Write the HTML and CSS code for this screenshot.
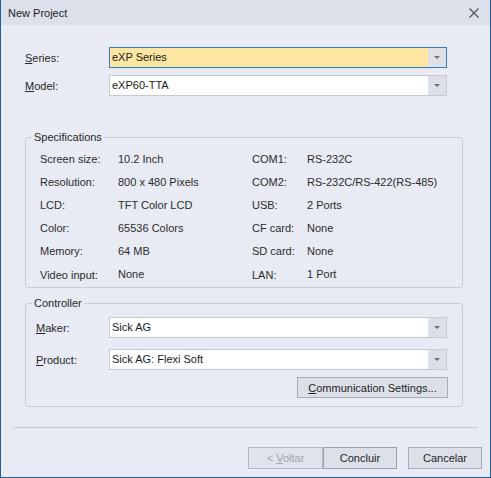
FILE: index.html
```html
<!DOCTYPE html>
<html>
<head>
<meta charset="utf-8">
<link rel="stylesheet" href="styles.css">
</head>
<body>
<div class="window">
  <div class="titlebar">
    <span class="title">New Project</span>
    <svg class="close" width="10" height="10" viewBox="0 0 10 10"><path d="M0.5 0.5 L9.5 9.5 M9.5 0.5 L0.5 9.5" stroke="#505257" stroke-width="1.2" fill="none"/></svg>
  </div>
  <div class="main">
    <div class="row">
      <span class="lbl lbl-top"><u>S</u>eries:</span>
      <div class="combo focused"><span class="combo-text">eXP Series</span><span class="combo-btn"><i class="arrow"></i></span></div>
    </div>
    <div class="row row-gap7">
      <span class="lbl lbl-top"><u>M</u>odel:</span>
      <div class="combo"><span class="combo-text">eXP60-TTA</span><span class="combo-btn"><i class="arrow"></i></span></div>
    </div>

    <fieldset class="group spec">
      <legend>Specifications</legend>
      <div class="spec-grid">
        <span>Screen size:</span><span>10.2 Inch</span><span>COM1:</span><span>RS-232C</span>
        <span>Resolution:</span><span>800 x 480 Pixels</span><span>COM2:</span><span>RS-232C/RS-422(RS-485)</span>
        <span>LCD:</span><span>TFT Color LCD</span><span>USB:</span><span>2 Ports</span>
        <span>Color:</span><span>65536 Colors</span><span>CF card:</span><span>None</span>
        <span>Memory:</span><span>64 MB</span><span>SD card:</span><span>None</span>
        <span class="low">Video input:</span><span>None</span><span class="low">LAN:</span><span>1 Port</span>
      </div>
    </fieldset>

    <fieldset class="group ctrl">
      <legend>Controller</legend>
      <div class="ctrl-body">
        <div class="row">
          <span class="lbl lbl-ctrl"><u>M</u>aker:</span>
          <div class="combo"><span class="combo-text">Sick AG</span><span class="combo-btn"><i class="arrow"></i></span></div>
        </div>
        <div class="row row-gap11">
          <span class="lbl lbl-ctrl"><u>P</u>roduct:</span>
          <div class="combo"><span class="combo-text">Sick AG: Flexi Soft</span><span class="combo-btn"><i class="arrow"></i></span></div>
        </div>
        <div class="row row-end">
          <button class="btn comm"><u>C</u>ommunication Settings...</button>
        </div>
      </div>
    </fieldset>
  </div>
  <div class="footer">
    <div class="sep"></div>
    <div class="buttons">
      <button class="btn dlg disabled">&lt; <u>V</u>oltar</button>
      <button class="btn dlg default">Concluir</button>
      <button class="btn dlg cancel">Cancelar</button>
    </div>
  </div>
</div>
</body>
</html>
```

FILE: styles.css
```css
html, body {
  margin: 0;
  padding: 0;
  background: #e8ebf4;
}
body {
  font-family: "Liberation Sans", Arial, sans-serif;
  font-size: 11px;
  color: #262626;
}
.window {
  width: 491px;
  height: 478px;
  box-sizing: border-box;
  border: 1px solid #1d5e9c;
  border-top: none;
  background: #e8ebf4;
  display: flex;
  flex-direction: column;
}
.titlebar {
  height: 25px;
  flex: none;
  background: #dbe0ea;
  display: flex;
  align-items: center;
  justify-content: space-between;
  padding: 0 11px 0 7px;
}
.title {
  font-size: 11px;
  color: #1e1e1e;
  line-height: 14px;
}
.close {
  display: block;
}
.main {
  padding: 22px 27px 0 24px;
}
.row {
  display: flex;
  align-items: center;
}
.row-gap7 { margin-top: 7px; }
.row-gap11 { margin-top: 11px; }
.row-end {
  justify-content: flex-end;
  margin-top: 7px;
}
.lbl {
  flex: none;
  color: #262626;
}
.lbl-top { width: 84px; }
.lbl-ctrl { width: 73px; }
.combo {
  width: 338px;
  height: 21px;
  box-sizing: border-box;
  border: 1px solid #c6c9d0;
  background: #ffffff;
  display: flex;
  align-items: stretch;
}
.combo.focused {
  border-color: #3a7db4;
  background: #fde6a2;
}
.combo-text {
  flex: 1;
  padding-left: 2px;
  line-height: 19px;
  color: #1a1a1a;
}
.combo-btn {
  width: 18px;
  background: #dcdfe7;
  display: flex;
  align-items: center;
  justify-content: center;
}
.combo.focused .combo-btn {
  background: #dfe1e6;
}
.arrow {
  width: 0;
  height: 0;
  border-left: 3px solid transparent;
  border-right: 3px solid transparent;
  border-top: 3px solid #707379;
}
.group {
  margin: 0;
  padding: 0;
  min-width: 0;
  border: 1px solid #c9cdd6;
  border-radius: 3px;
}
.group legend {
  margin-left: 6px;
  padding: 0 2px;
  line-height: 14px;
  color: #262626;
}
.spec { margin-top: 34px; }
.spec-grid {
  display: grid;
  grid-template-columns: 78px 134px 55px 1fr;
  grid-auto-rows: 23px;
  align-items: center;
  padding: 3px 0 2px 14px;
  color: #2b2b2b;
}
.spec-grid .low {
  position: relative;
  top: 1px;
}
.ctrl { margin-top: 8px; }
.ctrl-body {
  padding: 7px 14px 8px 10px;
}
.btn {
  font-family: "Liberation Sans", Arial, sans-serif;
  font-size: 11px;
  color: #1e1e1e;
  background: #dde0e9;
  border: 1px solid #a7acb7;
  border-radius: 0;
  padding: 0;
  margin: 0;
  box-sizing: border-box;
}
.comm {
  width: 151px;
  height: 21px;
}
.footer {
  padding: 0 8px 0 12px;
}
.sep {
  margin-top: 20px;
  margin-right: 4px;
  height: 1px;
  background: #c4c8d1;
}
.buttons {
  margin-top: 19px;
  display: flex;
  justify-content: flex-end;
}
.dlg {
  width: 75px;
  height: 22px;
}
.disabled {
  color: #a0a5ae;
  background: #e0e3eb;
  border-color: #b4b9c3;
}
.default {
  border-color: #9aa0ac;
  width: 74px;
}
.cancel {
  width: 74px;
  margin-left: 11px;
}
```
